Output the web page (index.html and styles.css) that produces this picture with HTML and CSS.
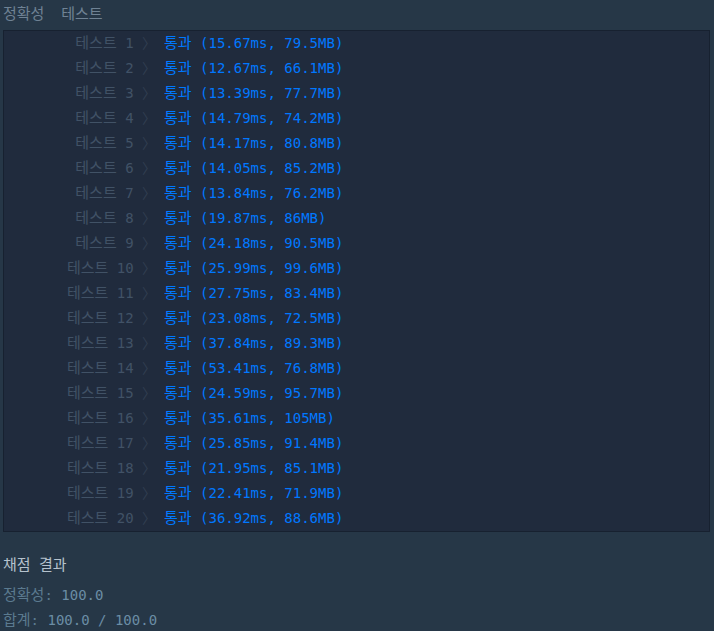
FILE: index.html
```html
<!DOCTYPE html>
<html lang="ko">

<head>
    <meta charset="UTF-8">
    <meta name="viewport" content="width=device-width, initial-scale=1.0">
    <title>채점 결과</title>
    <link rel="stylesheet" href="styles.css">
</head>

<body>
    <div class="console">
        <!-- 정확성 테스트 -->
        <div class="section-title"><span class="ko">정확성</span>  <span class="ko">테스트</span></div>
        <div class="result-box">
            <div class="row"><span class="label"><span class="ko">테스트</span> 1 <i>〉</i></span><span class="pass"><span class="ko">통과</span> (15.67ms, 79.5MB)</span></div>
            <div class="row"><span class="label"><span class="ko">테스트</span> 2 <i>〉</i></span><span class="pass"><span class="ko">통과</span> (12.67ms, 66.1MB)</span></div>
            <div class="row"><span class="label"><span class="ko">테스트</span> 3 <i>〉</i></span><span class="pass"><span class="ko">통과</span> (13.39ms, 77.7MB)</span></div>
            <div class="row"><span class="label"><span class="ko">테스트</span> 4 <i>〉</i></span><span class="pass"><span class="ko">통과</span> (14.79ms, 74.2MB)</span></div>
            <div class="row"><span class="label"><span class="ko">테스트</span> 5 <i>〉</i></span><span class="pass"><span class="ko">통과</span> (14.17ms, 80.8MB)</span></div>
            <div class="row"><span class="label"><span class="ko">테스트</span> 6 <i>〉</i></span><span class="pass"><span class="ko">통과</span> (14.05ms, 85.2MB)</span></div>
            <div class="row"><span class="label"><span class="ko">테스트</span> 7 <i>〉</i></span><span class="pass"><span class="ko">통과</span> (13.84ms, 76.2MB)</span></div>
            <div class="row"><span class="label"><span class="ko">테스트</span> 8 <i>〉</i></span><span class="pass"><span class="ko">통과</span> (19.87ms, 86MB)</span></div>
            <div class="row"><span class="label"><span class="ko">테스트</span> 9 <i>〉</i></span><span class="pass"><span class="ko">통과</span> (24.18ms, 90.5MB)</span></div>
            <div class="row"><span class="label"><span class="ko">테스트</span> 10 <i>〉</i></span><span class="pass"><span class="ko">통과</span> (25.99ms, 99.6MB)</span></div>
            <div class="row"><span class="label"><span class="ko">테스트</span> 11 <i>〉</i></span><span class="pass"><span class="ko">통과</span> (27.75ms, 83.4MB)</span></div>
            <div class="row"><span class="label"><span class="ko">테스트</span> 12 <i>〉</i></span><span class="pass"><span class="ko">통과</span> (23.08ms, 72.5MB)</span></div>
            <div class="row"><span class="label"><span class="ko">테스트</span> 13 <i>〉</i></span><span class="pass"><span class="ko">통과</span> (37.84ms, 89.3MB)</span></div>
            <div class="row"><span class="label"><span class="ko">테스트</span> 14 <i>〉</i></span><span class="pass"><span class="ko">통과</span> (53.41ms, 76.8MB)</span></div>
            <div class="row"><span class="label"><span class="ko">테스트</span> 15 <i>〉</i></span><span class="pass"><span class="ko">통과</span> (24.59ms, 95.7MB)</span></div>
            <div class="row"><span class="label"><span class="ko">테스트</span> 16 <i>〉</i></span><span class="pass"><span class="ko">통과</span> (35.61ms, 105MB)</span></div>
            <div class="row"><span class="label"><span class="ko">테스트</span> 17 <i>〉</i></span><span class="pass"><span class="ko">통과</span> (25.85ms, 91.4MB)</span></div>
            <div class="row"><span class="label"><span class="ko">테스트</span> 18 <i>〉</i></span><span class="pass"><span class="ko">통과</span> (21.95ms, 85.1MB)</span></div>
            <div class="row"><span class="label"><span class="ko">테스트</span> 19 <i>〉</i></span><span class="pass"><span class="ko">통과</span> (22.41ms, 71.9MB)</span></div>
            <div class="row"><span class="label"><span class="ko">테스트</span> 20 <i>〉</i></span><span class="pass"><span class="ko">통과</span> (36.92ms, 88.6MB)</span></div>
        </div>

        <!-- 채점 결과 -->
        <div class="summary">
            <div class="summary-title"><span class="ko">채점</span> <span class="ko">결과</span></div>
            <div class="summary-line"><span class="key"><span class="ko">정확성</span>:</span> <span class="val">100.0</span></div>
            <div class="summary-line"><span class="key"><span class="ko">합계</span>:</span> <span class="val">100.0 / 100.0</span></div>
        </div>
    </div>
</body>

</html>
```

FILE: styles.css
```css
/* 전체 */
body {
    margin: 0;
    padding: 0;
    background-color: #263747;
    font-family: "DejaVu Sans Mono", "Noto Sans CJK KR", monospace;
    font-size: 14px;
    line-height: 25px;
    overflow: hidden;
}

.console {
    padding: 2px 4px 0 3px;
}

/* 한글은 조금 크게 (원본 글꼴 폭에 맞춤) */
.ko {
    font-size: 15px;
}

/* 섹션 제목 */
.section-title {
    color: #6f8294;
    margin-bottom: 3px;
    white-space: pre;
}

/* 결과 박스 */
.result-box {
    background-color: #202b3d;
    border: 1px solid #172130;
}

.row {
    display: grid;
    grid-template-columns: 152px 1fr;
    column-gap: 8px;
    white-space: pre;
}

.label {
    text-align: right;
    color: #415266;
}

.label i {
    font-style: normal;
    color: #313e51;
}

.pass {
    color: #0078ff;
}

/* 요약 */
.summary {
    margin-top: 21px;
}

.summary-title,
.summary-line {
    white-space: pre;
}

.summary-title {
    color: #b5c2cd;
    margin-bottom: 5px;
}

.summary .key {
    color: #5b7a8f;
}

.summary .val {
    color: #6b8da5;
}
```
